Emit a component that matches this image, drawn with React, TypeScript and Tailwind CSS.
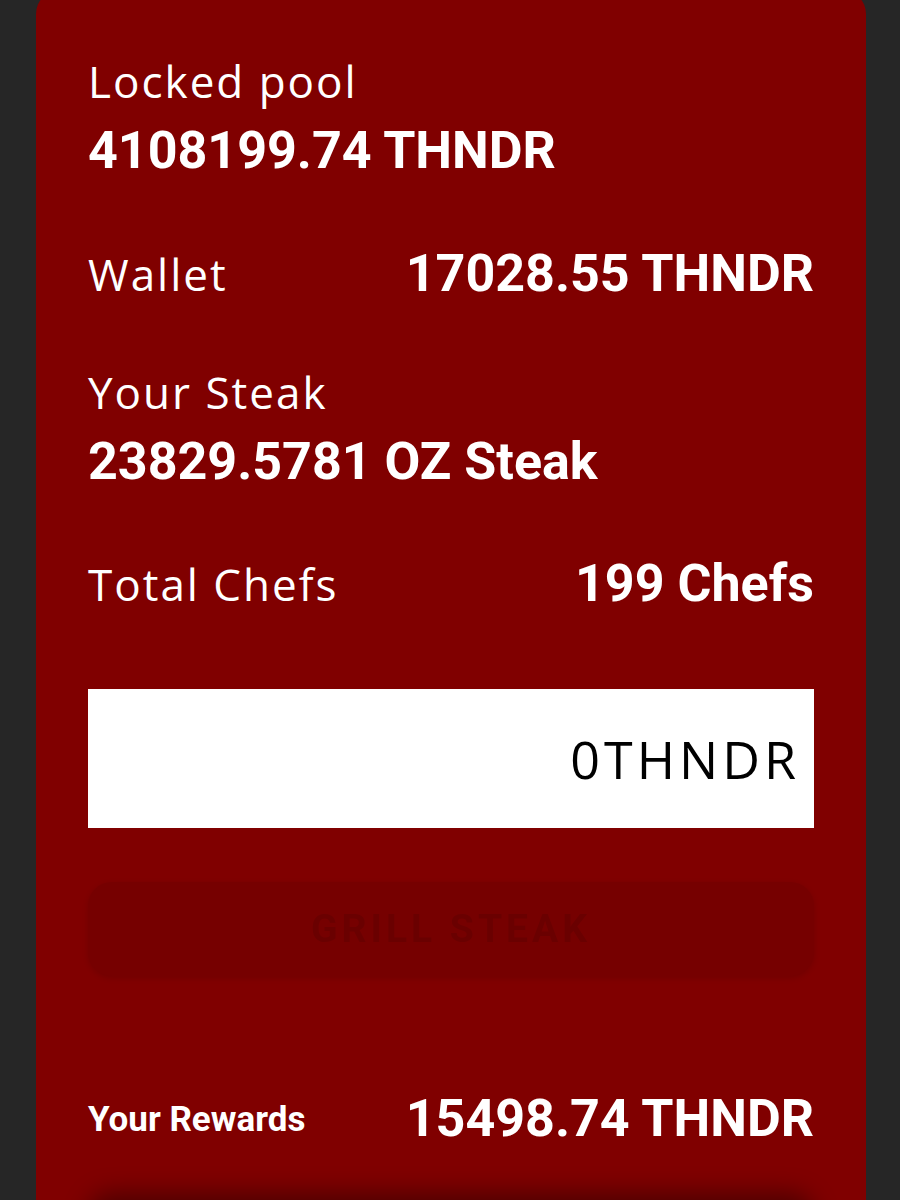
import React from 'react';

const label = "font-['Open_Sans',sans-serif] font-normal text-[44px] leading-[44px] tracking-[2px] text-white";
const value = "font-['Roboto',sans-serif] font-bold text-[52px] leading-[52px] text-white";

function StatRow({ title, amount }: { title: string; amount: string }) {
  return (
    <div className="flex items-baseline justify-between">
      <span className={label}>{title}</span>
      <span className={value}>{amount}</span>
    </div>
  );
}

export default function App() {
  return (
    <div className="min-h-[1200px] overflow-hidden bg-[#262626] pl-[36px] pr-[34px]">
      <div className="-mt-[10px] rounded-[24px] bg-[#800000] px-[52px] pt-[69px]">
        {/* Pool */}
        <div className={label}>Locked pool</div>
        <div className={`${value} mt-[22px]`}>4108199.74 THNDR</div>

        <div className="mt-[71px]">
          <StatRow title="Wallet" amount="17028.55 THNDR" />
        </div>

        <div className={`${label} mt-[70px]`}>Your Steak</div>
        <div className={`${value} mt-[22px]`}>23829.5781 OZ Steak</div>

        <div className="mt-[70px]">
          <StatRow title="Total Chefs" amount="199 Chefs" />
        </div>

        {/* Amount input */}
        <div className="mt-[79px] flex h-[139px] items-center justify-end bg-white pr-[14px]">
          <span className="font-['Open_Sans',sans-serif] text-[52px] leading-none tracking-[4px] text-black">0THNDR</span>
        </div>

        <button
          disabled
          className="mt-[54px] flex h-[94px] w-full items-center justify-center rounded-[24px] bg-[#760000] shadow-[0_2px_6px_rgba(0,0,0,0.12)]"
        >
          <span className="font-['Roboto',sans-serif] text-[39px] font-bold tracking-[4px] text-[#6a0000] blur-[0.6px]">
            GRILL STEAK
          </span>
        </button>

        <div className="mt-[117px] flex items-center justify-between">
          <span className="font-['Roboto',sans-serif] text-[35px] font-bold leading-[35px] text-white">Your Rewards</span>
          <span className={value}>15498.74 THNDR</span>
        </div>

        {/* next section peeking in under the fold */}
        <div className="mt-[56px] h-[80px] rounded-[24px] bg-[#800000] shadow-[0_-8px_24px_rgba(0,0,0,0.4)]" />
      </div>
    </div>
  );
}
